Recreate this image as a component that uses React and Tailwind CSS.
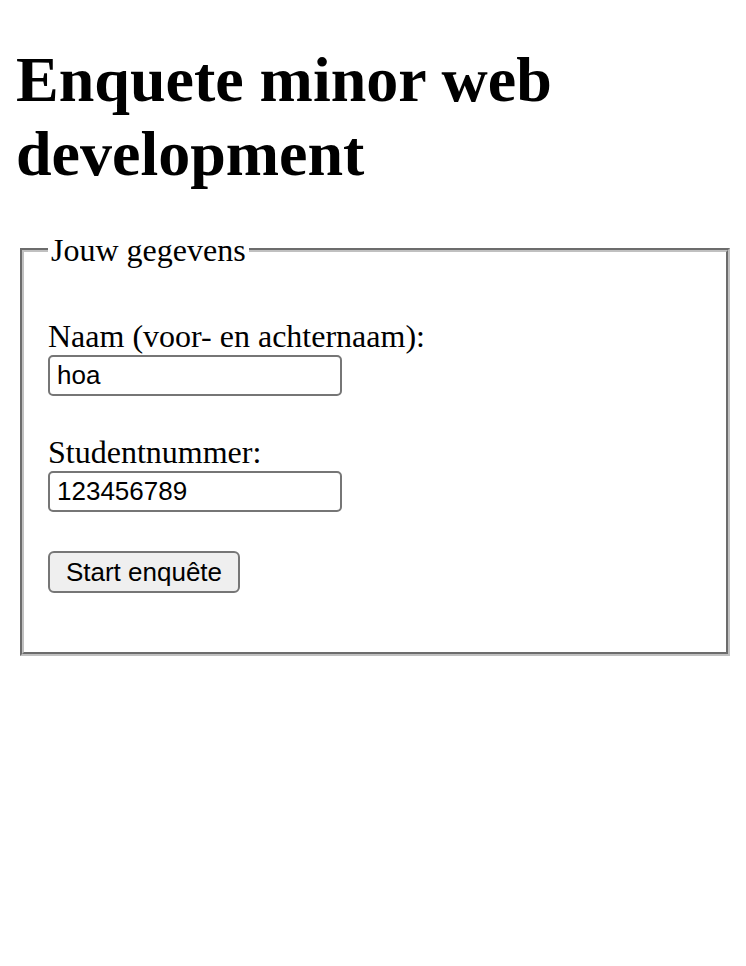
import React from 'react';

export default function App() {
  return (
    <div className="min-h-[966px] bg-white px-[16px] pt-[43px] text-black font-['Liberation_Serif','Times_New_Roman',serif]">
      {/* titel */}
      <h1 className="text-[64px] font-bold leading-[74px]">Enquete minor web development</h1>

      {/* formulier */}
      <form className="mt-[41px]" onSubmit={(e) => e.preventDefault()}>
        <fieldset className="ml-[4px] border-[4px] [border-style:groove] border-[#c0c0c0] px-[24px] pb-[59px]">
          <legend className="px-[3px] text-[32px] leading-[36px]">Jouw gegevens</legend>

          <div className="flex flex-col items-start">
            <label htmlFor="naam" className="mt-[50px] text-[32px] leading-[36px]">
              Naam (voor- en achternaam):
            </label>
            <input
              id="naam"
              type="text"
              defaultValue="hoa"
              className="mt-[1px] h-[41px] w-[294px] rounded-[5px] border-2 border-[#767676] bg-white px-[7px] text-[26px] font-['Liberation_Sans',Arial,sans-serif] outline-none"
            />

            <label htmlFor="studentnummer" className="mt-[38px] text-[32px] leading-[36px]">
              Studentnummer:
            </label>
            <input
              id="studentnummer"
              type="text"
              defaultValue="123456789"
              className="mt-[1px] h-[41px] w-[294px] rounded-[5px] border-2 border-[#767676] bg-white px-[7px] text-[26px] font-['Liberation_Sans',Arial,sans-serif] outline-none"
            />

            <button
              type="submit"
              className="mt-[39px] h-[42px] w-[192px] rounded-[6px] border-2 border-[#767676] bg-[#efefef] text-[26px] font-['Liberation_Sans',Arial,sans-serif]"
            >
              Start enquête
            </button>
          </div>
        </fieldset>
      </form>
    </div>
  );
}
